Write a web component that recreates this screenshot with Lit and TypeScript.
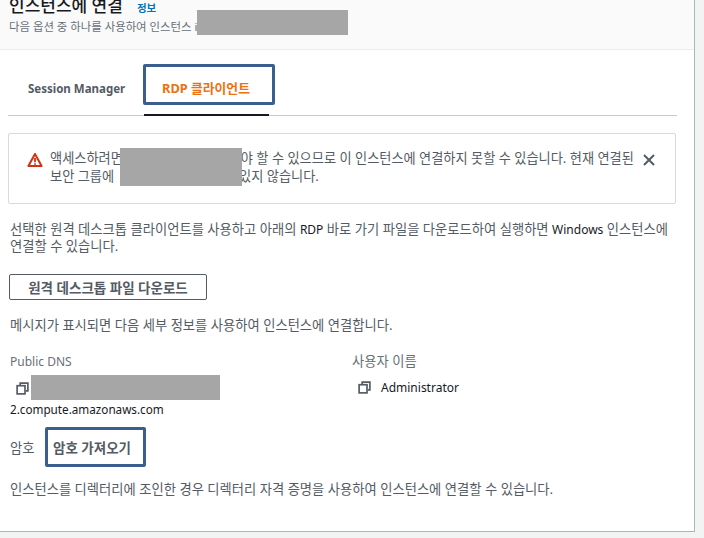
import { LitElement, html, css } from "lit";
import { customElement } from "lit/decorators.js";

const copyIcon = html`<svg class="copy" viewBox="0 0 14 14" fill="none" stroke="#545b64" stroke-width="1.8"><path d="M4.5 3.5V1.2h8.3v8.3h-2.3"/><rect x="1.2" y="4" width="8.5" height="8.8"/></svg>`;

@customElement("app-root")
export class AppRoot extends LitElement {
  static styles = css`
    :host { display: block; width: 704px; height: 538px; overflow: hidden; background: #f2f3f3; position: relative;
      font-family: "Noto Sans", "Noto Sans CJK KR", sans-serif; font-size: 12px; color: #16191f; }
    .panel { width: 695px; height: 532px; background: #fff; border-right: 1px solid #aab7b8; border-bottom: 1px solid #aab7b8; box-sizing: border-box; overflow: hidden; }
    .head { height: 50px; box-sizing: border-box; background: #fafafa; border-bottom: 1px solid #eaeded; padding: 0 9px; overflow: hidden; }
    .title { display: flex; align-items: baseline; gap: 14px; margin-top: -7px; height: 26px; line-height: 26px; }
    .title h1 { margin: 0; font-size: 17px; font-weight: 500; color: #16191f; }
    .title a { font-size: 10.5px; font-weight: 700; color: #0073bb; }
    .sub { margin-top: 0; font-size: 11.4px; line-height: 16px; color: #687078; }
    .body { padding: 0 18px 0 9px; }
    .tabs { display: flex; height: 66px; border-bottom: 1px solid #c5cccc; box-sizing: border-box; padding-left: 19px; width: 669px; margin-left: -1px; }
    .tab { font-weight: 700; font-size: 11.5px; color: #545b64; padding-top: 31px; line-height: 16px; }
    .tab.one { width: 117px; padding-left: 1px; box-sizing: border-box; }
    .tab.two { width: 125px; padding-left: 18px; box-sizing: border-box; color: #ec7211; border-bottom: 2px solid #16191f; height: 66px; padding-top: 30px; font-size: 12.8px; }
    .alert { margin-top: 17px; width: 668px; height: 71px; margin-left: -1px; box-sizing: border-box; border: 1px solid #d5dbdb; border-radius: 2px; display: flex; padding: 15px 0 0 18px; }
    .warn { width: 16px; height: 16px; margin-top: 3px; flex: none; }
    .alert p { margin: 0 0 0 7px; width: 593px; font-size: 13.2px; line-height: 18px; color: #545b64; white-space: nowrap; }
    .gap { display: inline-block; }
    .close { width: 12px; height: 12px; margin: 5px 0 0 0; flex: none; }
    .desc { margin: 17px 0 0 1px; font-size: 13.3px; line-height: 17px; color: #545b64; white-space: nowrap; }
    .desc b { font-weight: 400; font-size: 12px; color: #16191f; }
    .btn { margin-top: 19px; width: 198px; height: 26px; box-sizing: border-box; border: 1px solid #545b64; border-radius: 2px; background: #fff; display: flex; align-items: center; justify-content: center; font-size: 13.5px; font-weight: 700; color: #545b64; }
    .msg { margin: 16px 0 0 1px; font-size: 13.3px; line-height: 18px; color: #545b64; }
    .cols { display: grid; grid-template-columns: 342px 1fr; margin: 20px 0 0 1px; height: 74px; }
    .lbl { font-size: 12px; line-height: 16px; color: #687078; }
    .lbl.ko { font-size: 13.3px; margin-top: -1px; }
    .val { display: flex; align-items: center; gap: 10px; padding-left: 6px; margin-top: 10px; height: 16px; font-size: 12px; color: #16191f; }
    .val.dns { gap: 0; }
    .copy { width: 13px; height: 13px; flex: none; }
    .dnsline { font-size: 11.7px; line-height: 16px; margin-top: 5px; color: #16191f; }
    .pw { display: flex; align-items: center; margin: 0 0 0 1px; height: 40px; margin-top: -1px; }
    .pw span { width: 43px; font-size: 13.3px; color: #545b64; }
    .pw strong { font-size: 13.5px; font-weight: 700; color: #545b64; }
    .final { margin: 13px 0 0 1px; font-size: 13.3px; line-height: 18px; color: #545b64; white-space: nowrap; }
    .mask { position: absolute; background: #a6a6a6; }
    .ring { position: absolute; box-sizing: border-box; border: 3px solid #3a5f8f; border-radius: 2px; }
  `;

  render() {
    return html`
      <div class="panel">
        <div class="head">
          <div class="title"><h1>인스턴스에 연결</h1><a>정보</a></div>
          <div class="sub">다음 옵션 중 하나를 사용하여 인스턴스 i</div>
        </div>
        <div class="body">
          <div class="tabs">
            <div class="tab one">Session Manager</div>
            <div class="tab two">RDP 클라이언트</div>
          </div>
          <div class="alert">
            <svg class="warn" viewBox="0 0 16 16"><path d="M8 2 14.6 14H1.4Z" fill="#fff" stroke="#d13212" stroke-width="2" stroke-linejoin="round"/><path d="M8 6v4.2M8 11.2v1.6" stroke="#d13212" stroke-width="1.8"/></svg>
            <p>액세스하려면<span class="gap" style="width:118px"></span>야 할 수 있으므로 이 인스턴스에 연결하지 못할 수 있습니다. 현재 연결된<br>보안 그룹에<span class="gap" style="width:125px"></span>있지 않습니다.</p>
            <svg class="close" viewBox="0 0 12 12" stroke="#545b64" stroke-width="2" fill="none"><path d="M1 1 11 11M11 1 1 11"/></svg>
          </div>
          <div class="desc">선택한 원격 데스크톱 클라이언트를 사용하고 아래의 <b>RDP</b> 바로 가기 파일을 다운로드하여 실행하면 <b>Windows</b> 인스턴스에<br>연결할 수 있습니다.</div>
          <div class="btn">원격 데스크톱 파일 다운로드</div>
          <div class="msg">메시지가 표시되면 다음 세부 정보를 사용하여 인스턴스에 연결합니다.</div>
          <div class="cols">
            <div>
              <div class="lbl">Public DNS</div>
              <div class="val dns">${copyIcon}</div>
              <div class="dnsline">2.compute.amazonaws.com</div>
            </div>
            <div>
              <div class="lbl ko">사용자 이름</div>
              <div class="val">${copyIcon}Administrator</div>
            </div>
          </div>
          <div class="pw"><span>암호</span><strong>암호 가져오기</strong></div>
          <div class="final">인스턴스를 디렉터리에 조인한 경우 디렉터리 자격 증명을 사용하여 인스턴스에 연결할 수 있습니다.</div>
        </div>
      </div>
      <div class="mask" style="left:197px;top:10px;width:151px;height:25px"></div>
      <div class="mask" style="left:120px;top:148px;width:122px;height:38px"></div>
      <div class="mask" style="left:31px;top:375px;width:189px;height:25px"></div>
      <div class="ring" style="left:143px;top:64px;width:132px;height:41px"></div>
      <div class="ring" style="left:45px;top:427px;width:101px;height:40px"></div>
    `;
  }
}
